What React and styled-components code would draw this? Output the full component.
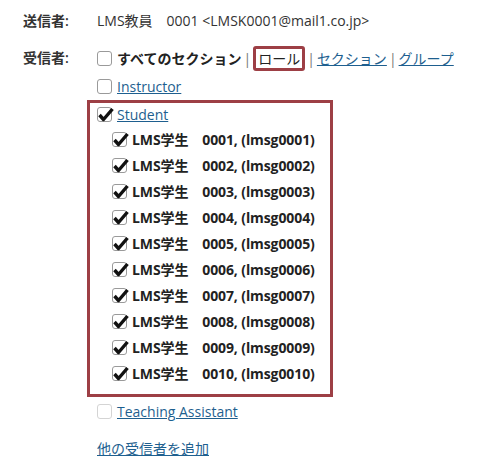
import React from 'react'
import styled, { createGlobalStyle } from 'styled-components'

const GlobalStyle = createGlobalStyle`
  body {
    margin: 0;
    background: #fff;
    font-family: "Open Sans", "Noto Sans CJK JP", sans-serif;
    font-size: 14px;
    color: #333;
  }
`

const Page = styled.div`
  padding: 11px 0 0 23px;
`

const Row = styled.div`
  display: grid;
  grid-template-columns: 74px 1fr;
  margin-bottom: ${({ gap }) => gap || 0}px;
`

const Label = styled.div`
  font-weight: 600;
  line-height: ${({ lh }) => lh || 20}px;
  color: #333;
`

const Value = styled.div`
  line-height: 20px;
  color: #333;
`

const Line = styled.div`
  display: flex;
  align-items: center;
  height: ${({ h }) => h || 20}px;
  margin-left: ${({ indent }) => indent || 0}px;
  margin-bottom: ${({ mb }) => mb || 0}px;
  gap: ${({ gap }) => gap || 5}px;
`

const Link = styled.a`
  color: #1e5f8f;
  text-decoration: underline;
  cursor: pointer;
`

const Bold = styled.span`
  font-weight: 700;
  color: #222;
  letter-spacing: ${({ tight }) => (tight ? '-0.1px' : 'normal')};
`

const Sep = styled.span`
  color: #777;
  margin: 0 2px;
`

const Active = styled.span`
  border: 3px solid #9d3f45;
  border-radius: 3px;
  padding: 0 2px;
  line-height: 18px;
  color: #222;
`

const Group = styled.div`
  border: 3px solid #9d3f45;
  margin-left: -10px;
  width: 233px;
  padding: 1px 0 8px 7px;
`

const Entries = styled.div`
  display: flex;
  flex-direction: column;
  margin-top: 2px;
`

const BoxWrap = styled.span`
  display: inline-flex;
  width: 15px;
  height: 15px;
  flex: none;
  position: relative;
  box-sizing: border-box;
  border: 1px solid ${({ disabled }) => (disabled ? '#d4d4d4' : '#9a9a9a')};
  border-radius: 3px;
  background: #fff;
`

const Tick = styled.svg`
  position: absolute;
  left: 0px;
  top: -1px;
`

function Checkbox({ checked, disabled }) {
  return (
    <BoxWrap disabled={disabled}>
      {checked && (
        <Tick width="16" height="15" viewBox="0 0 16 15">
          <path d="M1.5 8 L5.5 12.5 L14.5 2" fill="none" stroke="#111" strokeWidth="3.4" strokeLinejoin="round" />
        </Tick>
      )}
    </BoxWrap>
  )
}

const students = Array.from({ length: 10 }, (_, i) => String(i + 1).padStart(4, '0'))

export default function App() {
  return (
    <Page>
      <GlobalStyle />
      <Row gap={15}>
        <Label>送信者:</Label>
        <Value>LMS教員　0001 &lt;LMSK0001@mail1.co.jp&gt;</Value>
      </Row>
      <Row>
        <Label lh={24}>受信者:</Label>
        <div>
          <Line h={24} mb={6}>
            <Checkbox />
            <span>
              <Bold>すべてのセクション</Bold>
              <Sep>|</Sep>
              <Active>ロール</Active>
              <Sep>|</Sep>
              <Link>セクション</Link>
              <Sep>|</Sep>
              <Link>グループ</Link>
            </span>
          </Line>
          <Line mb={4}>
            <Checkbox />
            <Link>Instructor</Link>
          </Line>
          <Group>
            <Line>
              <Checkbox checked />
              <Link>Student</Link>
            </Line>
            <Entries>
              {students.map((n) => (
                <Line key={n} h={26} indent={15} gap={5}>
                  <Checkbox checked />
                  <Bold tight>LMS学生　{n}, (lmsg{n})</Bold>
                </Line>
              ))}
            </Entries>
          </Group>
          <Line h={28}>
            <Checkbox disabled />
            <Link>Teaching Assistant</Link>
          </Line>
          <Line h={46}>
            <Link>他の受信者を追加</Link>
          </Line>
        </div>
      </Row>
    </Page>
  )
}
